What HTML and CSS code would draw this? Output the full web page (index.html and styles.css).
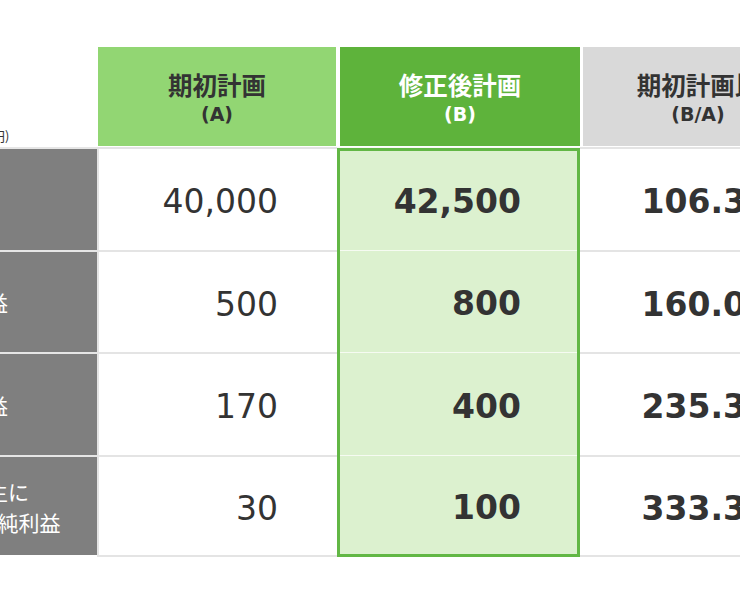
FILE: index.html
```html
<!DOCTYPE html>
<html lang="ja">
<head>
<meta charset="utf-8">
<title>業績予想の修正</title>
<link rel="stylesheet" href="styles.css">
</head>
<body>
<div class="sheet">
  <div class="plan-table">
    <div class="hd hd-label"><span class="unit">(単位：百万円)</span></div>
    <div class="hd hd-a"><span class="hd-title">期初計画</span><span class="hd-sub">(A)</span></div>
    <div class="hd hd-b"><span class="hd-title">修正後計画</span><span class="hd-sub">(B)</span></div>
    <div class="hd hd-c"><span class="hd-title">期初計画比</span><span class="hd-sub">(B/A)</span></div>

    <div class="cell label r1">売上高</div>
    <div class="cell num-a r1">40,000</div>
    <div class="cell num-b r1">42,500</div>
    <div class="cell num-c r1">106.3%</div>

    <div class="cell label r2">営業利益</div>
    <div class="cell num-a r2">500</div>
    <div class="cell num-b r2">800</div>
    <div class="cell num-c r2">160.0%</div>

    <div class="cell label r3">経常利益</div>
    <div class="cell num-a r3">170</div>
    <div class="cell num-b r3">400</div>
    <div class="cell num-c r3">235.3%</div>

    <div class="cell label r4 last">親会社株主に<br>帰属する当期純利益</div>
    <div class="cell num-a r4 last">30</div>
    <div class="cell num-b r4 last">100</div>
    <div class="cell num-c r4 last">333.3%</div>

    <div class="highlight"></div>
  </div>
</div>
</body>
</html>
```
FILE: styles.css
```css
html, body {
  margin: 0;
  padding: 0;
  background: #ffffff;
  overflow: hidden;
}

.sheet {
  padding-top: 47px;
  margin-left: -165px;
  font-family: "Noto Sans CJK JP", "DejaVu Sans", sans-serif;
  color: #333333;
}

.plan-table {
  display: grid;
  grid-template-columns: 262px 240px 243px 233px;
  grid-template-rows: 100px repeat(4, 102.5px);
  width: 978px;
}

.hd {
  display: flex;
  flex-direction: column;
  align-items: center;
  justify-content: center;
  margin-bottom: 1px;
  padding-top: 3px;
  box-sizing: border-box;
}

.hd-label {
  justify-content: flex-end;
  padding-bottom: 1px;
}

.unit {
  font-size: 13px;
  line-height: 18px;
  color: #333333;
}

.hd-a {
  background: #92d673;
  margin-left: 1px;
  margin-right: 1px;
  color: #333333;
}

.hd-b {
  background: #5eb33b;
  margin-left: 3px;
  color: #ffffff;
}

.hd-c {
  background: #d9d9d9;
  margin-left: 3px;
  color: #333333;
}

.hd-title {
  font-family: "Noto Sans CJK JP", sans-serif;
  font-weight: 700;
  font-size: 24.5px;
  line-height: 30px;
}

.hd-sub {
  font-family: "DejaVu Sans", "Noto Sans CJK JP", sans-serif;
  font-weight: 700;
  font-size: 19px;
  line-height: 24px;
  margin-top: 2px;
}

.cell {
  display: flex;
  align-items: center;
  box-sizing: border-box;
  border-top: 2px solid #e4e4e4;
}

.r1 { grid-row: 2; }
.r2 { grid-row: 3; }
.r3 { grid-row: 4; }
.r4 { grid-row: 5; }

.cell.last {
  border-bottom: 2px solid #e4e4e4;
}

.label {
  grid-column: 1;
  background: #7f7f7f;
  color: #ffffff;
  justify-content: center;
  text-align: center;
  font-size: 21px;
  line-height: 31px;
  border-top-color: #e6e6e6;
  padding-top: 2px;
}

.label.last {
  border-bottom-color: #ffffff;
}

.num-a,
.num-b,
.num-c {
  justify-content: flex-end;
  font-family: "DejaVu Sans", sans-serif;
  font-size: 33px;
  color: #333333;
  padding-top: 5px;
}

.num-a {
  grid-column: 2;
  border-left: 2px solid #e4e4e4;
  padding-right: 59px;
  font-weight: 400;
}

.num-b {
  grid-column: 3;
  background: #dcf1cf;
  border-top: 1px solid #f6fbf2;
  padding-right: 59px;
  font-weight: 700;
}

.num-c {
  grid-column: 4;
  padding-right: 34px;
  font-weight: 700;
}

.highlight {
  grid-column: 3;
  grid-row: 2 / 6;
  border: 3px solid #62b745;
  margin-top: 1px;
  pointer-events: none;
}
```
